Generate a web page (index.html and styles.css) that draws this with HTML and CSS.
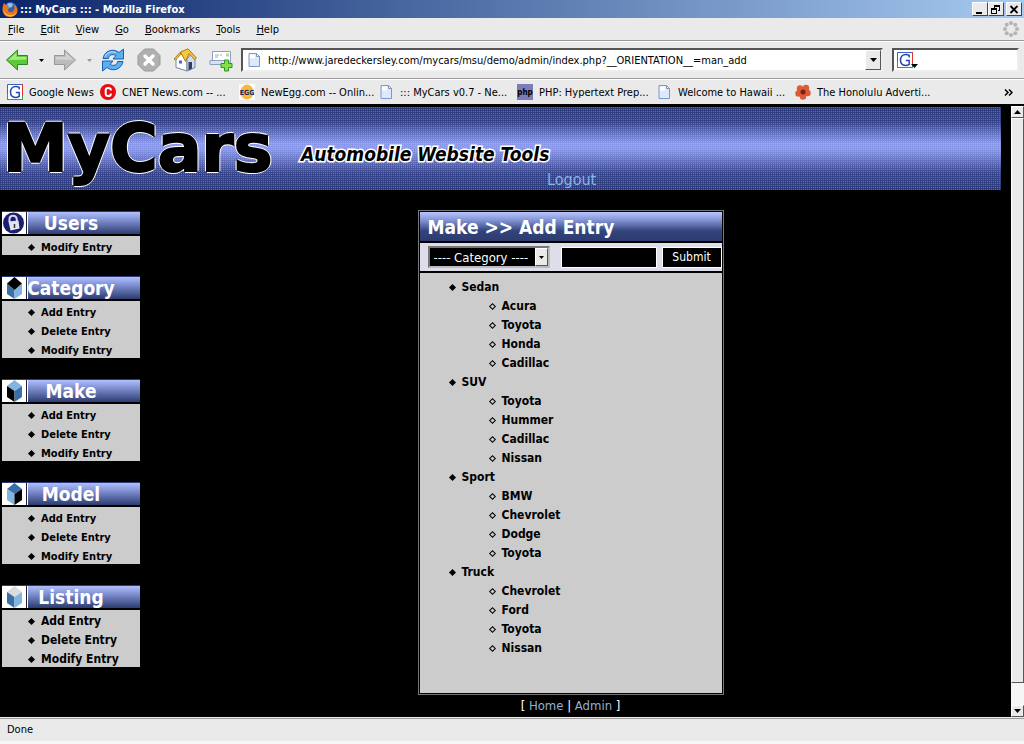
FILE: index.html
```
<!DOCTYPE html>
<html lang="en">
<head>
  <meta charset="UTF-8">
  <meta name="viewport" content="width=device-width, initial-scale=1.0">
  <title>::: MyCars ::: - Mozilla Firefox</title>
  <link rel="stylesheet" href="styles.css">
</head>
<body>
  <!-- shared shapes -->
  <svg class="sprites" aria-hidden="true">
    <symbol id="page" viewBox="0 0 16 16">
      <path d="M3 1.500h7.500l3 3v10H3z" fill="#dce8fb" stroke="#8296c4"/>
      <path d="M4 2.500h5v4H4z" fill="#fff"/>
      <path d="M10.500 1.500v3h3z" fill="#fff" stroke="#8296c4" stroke-linejoin="round"/>
    </symbol>
    <symbol id="google" viewBox="0 0 16 16">
      <path d="M0 0h16v16H0z" fill="#fff"/>
      <path d="M.5 16V.5H15" fill="none" stroke="#3a62c8"/>
      <path d="M15.500 0v11" stroke="#d33"/>
      <path d="M0 15.500h16M.5 10v6M15.500 11v5" stroke="#3a9a4a"/>
      <path d="M12.200 5.500V3.300C11 2.600 10 2.400 8.800 2.400 5.600 2.400 3.500 4.800 3.500 8s2 5.400 5 5.400c1.500 0 2.700-.4 3.700-1.100V8.600H8.800" fill="none" stroke="#2347b5" stroke-width="1.500"/>
    </symbol>
    <symbol id="down" viewBox="0 0 7 4"><path d="M0 0h7L3.500 4z" fill="currentColor"/></symbol>
    <symbol id="up" viewBox="0 0 7 4"><path d="M0 4h7L3.500 0z" fill="currentColor"/></symbol>
  </svg>

  <header class="titlebar">
    <svg class="fox" viewBox="0 0 16 16" aria-hidden="true">
      <circle cx="8.500" cy="7.500" r="6.500" fill="#2d62b8"/>
      <path d="M5 3q3-2 6 0l-1 3-3 1z" fill="#8ec3ee"/>
      <path d="M2 2l2 2 2-.5C5 5 6 6 8 6.500 7 7.500 5.500 8 6 9.500c1 2.500 5 2 6-.5 1-2 .5-4-1-6 3 1.500 5 4 4.500 7C15 13.500 12 16 8 16 3.500 16 .5 13 .5 8.500.5 6 1 4 2 2z" fill="#e87518"/>
      <path d="M1.500 7c0 4 3 7 7 7 3 0 5-1 6.500-3.500C14 14 11.500 15.500 8 15.500 4 15.500 1 12 1.500 7z" fill="#f9b53a"/>
    </svg>
    <span class="window-title">::: MyCars ::: - Mozilla Firefox</span>
    <div class="window-buttons">
      <button class="win-btn" aria-label="Minimize"><svg viewBox="0 0 10 9"><path d="M1 7h6v2H1z"/></svg></button>
      <button class="win-btn" aria-label="Restore"><svg viewBox="0 0 10 9"><path d="M3 0h6v6H7V5h1V2H4v1H3zM0 3h6v6H0zM1 5v3h4V5z" fill-rule="evenodd"/></svg></button>
      <button class="win-btn close" aria-label="Close"><svg viewBox="0 0 10 9"><path d="M1.500 1l7 7m0-7l-7 7" stroke="#000" stroke-width="1.800"/></svg></button>
    </div>
  </header>

  <nav class="menubar">
    <button><u>F</u>ile</button>
    <button><u>E</u>dit</button>
    <button><u>V</u>iew</button>
    <button><u>G</u>o</button>
    <button><u>B</u>ookmarks</button>
    <button><u>T</u>ools</button>
    <button><u>H</u>elp</button>
    <svg class="throbber" viewBox="0 0 16 16" fill="#b4b4b4" aria-hidden="true">
      <circle cx="8" cy="2" r="2"/><circle cx="12.300" cy="3.700" r="2"/><circle cx="14" cy="8" r="2"/><circle cx="12.300" cy="12.300" r="2"/>
      <circle cx="8" cy="14" r="2"/><circle cx="3.700" cy="12.300" r="2"/><circle cx="2" cy="8" r="2"/><circle cx="3.700" cy="3.700" r="2"/>
    </svg>
  </nav>

  <div class="toolbar">
    <div class="nav-buttons">
      <button class="tool" aria-label="Back">
        <svg viewBox="0 0 24 24"><path d="M1.500 12L12.500 2v5.500h10v9h-10V22z" fill="#5cc93a" stroke="#2a8a20" stroke-linejoin="round"/><path d="M3.500 12l8-7.500V9h10v2.500z" fill="#a5ec7e"/></svg>
      </button>
      <button class="tool caret" aria-label="Back history"><svg viewBox="0 0 7 4"><use href="#down"/></svg></button>
      <button class="tool" aria-label="Forward">
        <svg viewBox="0 0 24 24"><path d="M22.500 12L11.500 2v5.500h-10v9h10V22z" fill="#bcbcbc" stroke="#999" stroke-linejoin="round"/><path d="M20.500 12l-8-7.500V9h-10v2.500z" fill="#d2d2d2"/></svg>
      </button>
      <button class="tool caret dim" aria-label="Forward history"><svg viewBox="0 0 7 4"><use href="#down"/></svg></button>
      <button class="tool" aria-label="Reload">
        <svg viewBox="0 0 24 24" fill="#57b0f0" stroke="#1c5cb4" stroke-linejoin="round">
          <path d="M2 10.500C3 4.500 9 .5 15.500 3L18 4.500 22.500 1v10H12l3-3.500C11 5.500 8 7 7.500 10.500z"/>
          <path d="M22 13.500c-1 6-7 10-13.500 7.500L6 19.500 1.500 23V13H12l-3 3.500c4 2 7 .5 7.500-3z"/>
          <path d="M4 8.500c2-4 6-5.500 10.500-4" fill="none" stroke="#bfe4ff"/>
        </svg>
      </button>
      <button class="tool" aria-label="Stop">
        <svg viewBox="0 0 24 24"><path d="M7.500 1h9L23 7.500v9L16.500 23h-9L1 16.500v-9z" fill="#b0b0b0" stroke="#989898"/><path d="M8 8l8 8m0-8l-8 8" stroke="#fff" stroke-width="3.500" stroke-linecap="round"/></svg>
      </button>
      <button class="tool" aria-label="Home">
        <svg viewBox="0 0 24 24"><path d="M3 10.500L7.500 5l6.500 7v11L3 19.500z" fill="#fff" stroke="#7484a8"/><path d="M14 23V11l5-6 3 5v9.500z" fill="#cfdcf2" stroke="#7484a8"/><path d="M12.500 13.500L7.500 4 15 .8 23.500 10l-2 1.500L16 5.500z" fill="#f6c63c" stroke="#b07c10" stroke-linejoin="round"/><path d="M7.500 4L1 11l1.500 1 5-5.500z" fill="#f6c63c" stroke="#b07c10"/><path d="M15.500 22.500V14h3.500v6.500z" fill="#333d58"/><path d="M6 12.500h3v3H6z" fill="#4c6bb0"/></svg>
      </button>
      <button class="tool" aria-label="New mail">
        <svg viewBox="0 0 24 24"><path d="M3.500 3.500h18v12h-20v-2h2z" fill="#fff" stroke="#8fa0be"/><path d="M1 12.500h19v4H1z" fill="#d8e2f4" stroke="#8fa0be"/><path d="M6 7h4m1 0h2M6 9h3" stroke="#9ab"/><path d="M17 5.500h3v3h-3z" fill="#b7d79c"/><path d="M15.500 12h4v3.500H23v4h-3.500V23h-4v-3.500H12v-4h3.500z" fill="#86e04e" stroke="#2f9426"/></svg>
      </button>
    </div>
    <div class="location">
      <svg class="icon" viewBox="0 0 16 16" aria-hidden="true"><use href="#page"/></svg>
      <input type="text" aria-label="Location" value="http://www.jaredeckersley.com/mycars/msu/demo/admin/index.php?__ORIENTATION__=man_add">
      <button class="raised drop" aria-label="Show history"><svg viewBox="0 0 7 4"><use href="#down"/></svg></button>
    </div>
    <div class="search">
      <button aria-label="Search engine">
        <svg class="icon" viewBox="0 0 16 16"><use href="#google"/></svg>
        <svg class="engine-caret" viewBox="0 0 7 4"><use href="#down"/></svg>
      </button>
      <input type="text" aria-label="Search">
    </div>
  </div>

  <nav class="bookmarks">
    <a class="short" href="#"><svg class="icon" viewBox="0 0 16 16"><use href="#google"/></svg>Google News</a>
    <a href="#"><svg class="icon" viewBox="0 0 16 16"><circle cx="8" cy="8" r="8" fill="#e80c12"/><path d="M10.800 6.500V5.800C10.800 4.500 10 4 8.200 4 6.500 4 5.700 4.600 5.700 6v4c0 1.400.8 2 2.500 2 1.800 0 2.600-.5 2.600-1.800v-.7" fill="none" stroke="#fff" stroke-width="2"/></svg>CNET News.com -- ...</a>
    <a href="#"><svg class="icon" viewBox="0 0 16 16"><path d="M0 0h16v16H0z" fill="#fff"/><ellipse cx="8" cy="8" rx="6.500" ry="7.500" fill="#f8b840"/><text class="egg" x="8" y="11" text-anchor="middle">EGG</text></svg>NewEgg.com -- Onlin...</a>
    <a href="#"><svg class="icon" viewBox="0 0 16 16"><use href="#page"/></svg>::: MyCars v0.7 - Ne...</a>
    <a href="#"><svg class="icon" viewBox="0 0 16 16"><path d="M0 0h16v16H0z" fill="#7c7cb8"/><text class="php" x="8" y="11" text-anchor="middle">php</text></svg>PHP: Hypertext Prep...</a>
    <a href="#"><svg class="icon" viewBox="0 0 16 16"><use href="#page"/></svg>Welcome to Hawaii ...</a>
    <a href="#"><svg class="icon" viewBox="0 0 16 16" fill="#dc5a34"><circle cx="5" cy="4.500" r="3.200"/><circle cx="11" cy="4" r="3.200"/><circle cx="12.500" cy="9" r="3.200"/><circle cx="8" cy="12.500" r="3.200"/><circle cx="3.500" cy="9.500" r="3.200"/><circle cx="8" cy="8" r="2.500" fill="#7a2014"/></svg>The Honolulu Adverti...</a>
    <button class="more" aria-label="More bookmarks"><svg viewBox="0 0 9 7" fill="none" stroke="#000" stroke-width="1.500"><path d="M1 .5l3 3-3 3M5 .5l3 3-3 3"/></svg></button>
  </nav>

  <div class="viewport">
    <div class="site">
      <div class="banner">
        <h1 class="logo">MyCars</h1>
        <p class="tagline">Automobile Website Tools</p>
        <a class="logout" href="#">Logout</a>
      </div>

      <div class="columns">
        <aside class="sidebar">
          <section class="box">
            <h2><svg viewBox="0 0 23 22" aria-hidden="true"><circle cx="11" cy="11" r="10.500" fill="#1c1c74"/><path d="M7 10V7c0-4 6-4.500 7-1l.5 3" fill="none" stroke="#d8d8e8" stroke-width="2"/><path d="M6 9.500l10-1 1 8-9 2z" fill="#e4e4ec"/><path d="M12 12v4" stroke="#334" stroke-width="1.500"/></svg><span>Users</span></h2>
            <ul>
              <li><a href="#">Modify Entry</a></li>
            </ul>
          </section>

          <section class="box">
            <h2><svg viewBox="0 0 23 22" aria-hidden="true"><path d="M4.500 6.500L12 13v9l-7.500-5z" fill="#3a70a8"/><path d="M19.500 6.500L12 13v9l7.500-5z" fill="#82b4e0"/><path d="M12 0l7.500 6.500-7.500 6.500-7.500-6.500z" fill="#000"/></svg><span>Category</span></h2>
            <ul>
              <li><a href="#">Add Entry</a></li>
              <li><a href="#">Delete Entry</a></li>
              <li><a href="#">Modify Entry</a></li>
            </ul>
          </section>

          <section class="box">
            <h2><svg viewBox="0 0 23 22" aria-hidden="true"><path d="M12 0l7.500 6-7.500 5-7.500-5z" fill="#82b4e0"/><path d="M4.500 6L12 11v11l-7.500-5z" fill="#000"/><path d="M19.500 6L12 11v11l7.500-5z" fill="#3a70a8"/></svg><span>Make</span></h2>
            <ul>
              <li><a href="#">Add Entry</a></li>
              <li><a href="#">Delete Entry</a></li>
              <li><a href="#">Modify Entry</a></li>
            </ul>
          </section>

          <section class="box">
            <h2><svg viewBox="0 0 23 22" aria-hidden="true"><path d="M12 0l7.500 6-7.500 5-7.500-5z" fill="#3a70a8"/><path d="M4.500 6L12 11v11l-7.500-5z" fill="#82b4e0"/><path d="M19.500 6L12 11v11l7.500-5z" fill="#000"/></svg><span>Model</span></h2>
            <ul>
              <li><a href="#">Add Entry</a></li>
              <li><a href="#">Delete Entry</a></li>
              <li><a href="#">Modify Entry</a></li>
            </ul>
          </section>

          <section class="box large">
            <h2><svg viewBox="0 0 23 22" aria-hidden="true"><path d="M12 0l7.500 6-7.500 5-7.500-5z" fill="#dcdcdc"/><path d="M4.500 6L12 11v11l-7.500-5z" fill="#3a70a8"/><path d="M19.500 6L12 11v11l7.500-5z" fill="#82b4e0"/></svg><span>Listing</span></h2>
            <ul>
              <li><a href="#">Add Entry</a></li>
              <li><a href="#">Delete Entry</a></li>
              <li><a href="#">Modify Entry</a></li>
            </ul>
          </section>
        </aside>

        <main>
          <section class="panel">
            <h2>Make &gt;&gt; Add Entry</h2>
            <form>
              <div class="select">
                <select aria-label="Category">
                  <option>---- Category ----</option>
                  <option>Sedan</option>
                  <option>SUV</option>
                  <option>Sport</option>
                  <option>Truck</option>
                </select>
                <span class="raised"><svg viewBox="0 0 7 4"><use href="#down"/></svg></span>
              </div>
              <input type="text" aria-label="Make">
              <button type="submit">Submit</button>
            </form>
            <ul class="tree">
              <li>Sedan
                <ul>
                  <li>Acura</li>
                  <li>Toyota</li>
                  <li>Honda</li>
                  <li>Cadillac</li>
                </ul>
              </li>
              <li>SUV
                <ul>
                  <li>Toyota</li>
                  <li>Hummer</li>
                  <li>Cadillac</li>
                  <li>Nissan</li>
                </ul>
              </li>
              <li>Sport
                <ul>
                  <li>BMW</li>
                  <li>Chevrolet</li>
                  <li>Dodge</li>
                  <li>Toyota</li>
                </ul>
              </li>
              <li>Truck
                <ul>
                  <li>Chevrolet</li>
                  <li>Ford</li>
                  <li>Toyota</li>
                  <li>Nissan</li>
                </ul>
              </li>
            </ul>
          </section>
          <p class="footer">[ <a href="#">Home</a> | <a href="#">Admin</a> ]</p>
        </main>
      </div>
    </div>

    <div class="scrollbar">
      <button class="raised" aria-label="Scroll up"><svg viewBox="0 0 7 4"><use href="#up"/></svg></button>
      <div class="raised thumb"></div>
      <button class="raised" aria-label="Scroll down"><svg viewBox="0 0 7 4"><use href="#down"/></svg></button>
    </div>
  </div>

  <footer class="statusbar">Done</footer>
</body>
</html>
```
FILE: styles.css
```
* {
  box-sizing: border-box;
}
body {
  margin: 0;
  min-height: 100vh;
  display: flex;
  flex-direction: column;
  background: #eaeaea;
  color: #000;
  font-family: "DejaVu Sans Condensed", "DejaVu Sans", sans-serif;
  font-size: 11px;
}
button, input, select {
  font: inherit;
  color: inherit;
  margin: 0;
  padding: 0;
  border: 0;
  border-radius: 0;
  background: none;
}
h1, h2, p, ul {
  margin: 0;
  padding: 0;
}
ul {
  list-style: none;
}
a {
  color: inherit;
  text-decoration: none;
}
svg {
  display: block;
  flex: none;
}
.sprites {
  position: absolute;
  width: 0;
  height: 0;
}
.icon {
  width: 16px;
  height: 16px;
}
.raised {
  display: flex;
  align-items: center;
  justify-content: center;
  background: #eaeaea;
  border: 1px solid;
  border-color: #fff #555 #555 #fff;
}
.raised svg {
  width: 7px;
  height: 4px;
}

/* window chrome */
.titlebar {
  display: flex;
  align-items: center;
  height: 18px;
  padding: 0 2px;
  background: linear-gradient(to right, #0a246a, #a6caf0);
  color: #fff;
}
.fox {
  width: 16px;
  height: 16px;
}
.window-title {
  flex: 1;
  padding-left: 2px;
  font-weight: bold;
}
.window-buttons {
  display: flex;
}
.win-btn {
  display: flex;
  align-items: center;
  justify-content: center;
  width: 16px;
  height: 14px;
  background: #eaeaea;
  border: 1px solid;
  border-color: #fff #444 #444 #fff;
}
.win-btn svg {
  width: 10px;
  height: 9px;
}
.win-btn.close {
  margin-left: 2px;
}
.menubar {
  display: flex;
  align-items: center;
  gap: 16px;
  height: 23px;
  padding: 0 5px 0 8px;
  border-bottom: 1px solid #999;
}
.throbber {
  width: 16px;
  height: 16px;
  margin-left: auto;
}
.toolbar {
  display: flex;
  align-items: center;
  height: 38px;
  padding: 0 5px;
  border-top: 1px solid #fff;
  border-bottom: 1px solid #999;
}
.nav-buttons {
  display: flex;
  align-items: center;
  width: 236px;
  gap: 12px;
}
.tool svg {
  width: 24px;
  height: 24px;
}
.tool.caret {
  width: 12px;
  margin: 0 -6px;
}
.tool.caret svg {
  width: 5px;
  height: 3px;
  margin-left: 4px;
}
.tool.dim {
  color: #999;
}
.location, .search {
  display: flex;
  align-items: center;
  height: 24px;
  background: #fff;
  border: 2px solid;
  border-color: #555 #eee #eee #555;
}
.location {
  flex: 1;
  padding-left: 3px;
  gap: 6px;
}
.location input {
  flex: 1;
  min-width: 0;
}
.drop {
  align-self: stretch;
  width: 16px;
}
.search {
  width: 127px;
  margin-left: 9px;
  padding-left: 3px;
}
.search button {
  position: relative;
}
.search input {
  width: 90px;
}
.engine-caret {
  position: absolute;
  right: -5px;
  bottom: 0;
  width: 7px;
  height: 4px;
}
.bookmarks {
  display: flex;
  align-items: center;
  height: 27px;
  padding: 0 11px 0 7px;
  border-top: 1px solid #fff;
  border-bottom: 2px solid #000;
}
.bookmarks a {
  display: flex;
  align-items: center;
  gap: 6px;
  width: 139px;
  white-space: nowrap;
}
.bookmarks a.short {
  width: 93px;
}
.egg {
  font: bold 7px "DejaVu Sans Condensed", sans-serif;
  fill: #1c2860;
}
.php {
  font: bold 8px "DejaVu Sans Condensed", sans-serif;
}
.more {
  margin-left: auto;
}
.more svg {
  width: 9px;
  height: 7px;
}
.statusbar {
  height: 26px;
  padding-left: 7px;
  line-height: 22px;
  border-top: 1px solid #999;
  box-shadow: inset 0 -3px #f6f6f6;
}

/* page */
.viewport {
  flex: 1;
  display: flex;
  background: #000;
  border-bottom: 1px solid #eee;
}
.site {
  flex: 1;
  padding: 1px 10px 0 0;
}
.scrollbar {
  display: flex;
  flex-direction: column;
  width: 13px;
  background: #f6f6f6;
}
.scrollbar button {
  height: 12px;
}
.thumb {
  flex: 1;
  margin-bottom: 22px;
}
.banner {
  display: flex;
  height: 83px;
  background:
    conic-gradient(rgba(190, 200, 255, 0.35) 25%, transparent 0) 0 0 / 2px 2px,
    linear-gradient(#2c3a7c, #34428a 18%, #8c9aee 44%, #8896e8 52%, #36448c 80%, #2c3a7c);
}
.logo {
  width: 301px;
  padding-left: 3px;
  font: bold 65px/84px "DejaVu Sans", sans-serif;
  -webkit-text-stroke: 2px #000;
  text-shadow: 1px 1px #fff, -1px -1px #fff, 1px -1px #fff, -1px 1px #fff, 2px 0 #fff, -2px 0 #fff, 0 2px #fff, 0 -2px #fff;
}
.tagline {
  width: 246px;
  font: italic bold 19px/94px "DejaVu Sans Condensed", sans-serif;
  white-space: nowrap;
  -webkit-text-stroke: 3px #fff;
  paint-order: stroke;
}
.logout {
  align-self: flex-end;
  color: #8cb0e8;
  font-size: 16px;
  line-height: 20px;
}
.columns {
  display: flex;
}
.sidebar {
  width: 140px;
  padding: 21px 0 0 2px;
}
.box {
  margin-bottom: 21px;
}
.box h2 {
  display: grid;
  align-items: center;
  height: 25px;
  border-bottom: 2px solid #000;
  border-top: 1px solid #2c3a78;
  background: linear-gradient(#b0c0ff, #7484c4 45%, #2c3c70);
  color: #fff;
  font-size: 19px;
  line-height: 22px;
  text-align: center;
}
.box h2 svg, .box h2 span {
  grid-area: 1 / 1;
}
.box h2 svg {
  width: 24px;
  height: 22px;
  background: #fff;
  box-shadow: 1px 0 #223, 2px 0 #fff;
}
.box ul {
  padding-left: 26px;
  background: #ccc;
  font-weight: bold;
}
.box li, .tree li {
  position: relative;
  padding-left: 13px;
}
.box li {
  height: 19px;
  line-height: 23px;
}
.box li::before, .tree li::before {
  content: "";
  position: absolute;
  left: 1px;
  top: 7px;
  box-sizing: border-box;
  width: 5px;
  height: 5px;
  background: #000;
  transform: rotate(45deg);
}
.box li::before {
  top: 9px;
}
.box.large ul {
  font-size: 12px;
}
main {
  flex: 1;
  display: flex;
  flex-direction: column;
  align-items: center;
}
.panel {
  width: 306px;
  margin-top: 20px;
  padding: 1px;
  border: 1px solid #777;
}
.panel h2 {
  height: 31px;
  padding-left: 8px;
  border-bottom: 2px solid #000;
  background: linear-gradient(#b8c6ff, #8090d0 30%, #34447c 65%, #2c3c70);
  color: #fff;
  font-size: 19px;
  line-height: 30px;
}
.panel form {
  display: flex;
  align-items: center;
  height: 30px;
  padding-left: 8px;
  background: #dedeea;
  border-bottom: 2px solid #000;
  color: #fff;
  font-size: 12px;
}
.select {
  position: relative;
  width: 125px;
  margin-right: 11px;
}
.select select {
  appearance: none;
  width: 100%;
  height: 22px;
  padding-left: 4px;
  background: #000;
  border: 2px solid;
  border-color: #777 #bbb #bbb #777;
  font-size: 13px;
}
.select .raised {
  position: absolute;
  top: 2px;
  right: 2px;
  width: 13px;
  height: 18px;
  color: #000;
  pointer-events: none;
}
.select .raised svg {
  width: 5px;
  height: 3px;
}
.panel form input {
  width: 96px;
  height: 21px;
  margin-right: 5px;
  background: #000;
  border: 1px solid #fff;
}
.panel form button {
  flex: none;
  width: 60px;
  height: 21px;
  background: #000;
  border: 1px solid #fff;
}
.tree {
  padding: 5px 0 35px 29px;
  background: #ccc;
  font-size: 12px;
  font-weight: bold;
  line-height: 19px;
}
.tree ul {
  padding-left: 27px;
}
.tree ul li::before {
  background: none;
  border: 1px solid #000;
}
.footer {
  color: #fff;
  font-size: 13px;
  line-height: 22px;
}
.footer a {
  color: #93b0d0;
}
```
